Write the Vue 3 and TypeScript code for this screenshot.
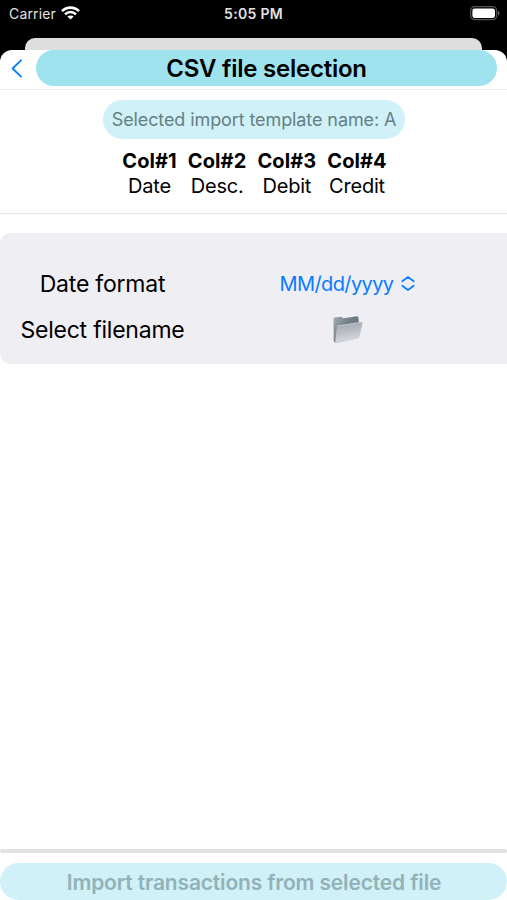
<script setup lang="ts">
interface ImportColumn {
  heading: string
  field: string
}

const columns: ImportColumn[] = [
  { heading: 'Col#1', field: 'Date' },
  { heading: 'Col#2', field: 'Desc.' },
  { heading: 'Col#3', field: 'Debit' },
  { heading: 'Col#4', field: 'Credit' },
]
const templateName = 'A'
const dateFormat = 'MM/dd/yyyy'
</script>

<template>
  <div class="screen">
    <div class="status">
      <div class="carrier">
        <span>Carrier</span>
        <svg class="wifi" width="19" height="14" viewBox="0 0 19 14" fill="none" stroke="#fff">
          <path d="M1 5.2 C5.7 .4 13.3 .4 18 5.2" stroke-width="2.6" />
          <path d="M4 8.3 C7.1 5.2 11.9 5.2 15 8.3" stroke-width="2.4" />
          <path d="M6.4 10.5 C8.1 9 10.9 9 12.6 10.5 L9.5 13.6Z" fill="#fff" stroke="none" />
        </svg>
      </div>
      <span class="time">5:05 PM</span>
      <svg class="battery" width="30" height="15" viewBox="0 0 30 15">
        <rect x="0.7" y="0.7" width="26" height="13" rx="4" fill="none" stroke="#555" stroke-width="1.2" />
        <rect x="2.4" y="2.4" width="22.6" height="9.6" rx="2.3" fill="#fff" />
        <path d="M28 5 C30 5.7 30 8.8 28 9.5Z" fill="#666" />
      </svg>
    </div>
    <div class="back-sheet"></div>
    <main class="sheet">
      <header class="header">
        <button class="back" aria-label="Back">
          <svg width="12" height="19" viewBox="0 0 12 19" fill="none" stroke="#087cff" stroke-width="1.8" stroke-linecap="round" stroke-linejoin="round">
            <path d="M10 1.3 L1.6 9.5 L10 17.7" />
          </svg>
        </button>
        <h1 class="title"><span>CSV file selection</span></h1>
      </header>
      <section class="template">
        <div class="template-name"><span>Selected import template name: {{ templateName }}</span></div>
        <div class="columns">
          <div v-for="column in columns" :key="column.heading" class="column">
            <strong>{{ column.heading }}</strong>
            <span>{{ column.field }}</span>
          </div>
        </div>
      </section>
      <section class="options">
        <div class="labels">
          <span>Date format</span>
          <span>Select filename</span>
        </div>
        <div class="controls">
          <button class="picker">
            <span>{{ dateFormat }}</span>
            <svg width="14" height="16" viewBox="0 0 14 16" fill="none" stroke="#087cff" stroke-width="1.7" stroke-linecap="round" stroke-linejoin="round">
              <path d="M1.3 5.2 L7 1 L12.7 5.2 M1.3 9.8 L7 14 L12.7 9.8" />
            </svg>
          </button>
          <button class="folder" aria-label="Choose file">
            <svg width="32" height="30" viewBox="0 0 32 30">
              <defs>
                <linearGradient id="folder-back" x1="0" y1="0" x2="1" y2="0.6">
                  <stop offset="0" stop-color="#a3adb2" />
                  <stop offset="0.5" stop-color="#758188" />
                  <stop offset="1" stop-color="#626e76" />
                </linearGradient>
                <linearGradient id="folder-front" x1="0.3" y1="0" x2="0.5" y2="1">
                  <stop offset="0" stop-color="#a0a5ad" />
                  <stop offset="0.5" stop-color="#bdc0c7" />
                  <stop offset="0.85" stop-color="#d3d5da" />
                  <stop offset="1" stop-color="#8d989f" />
                </linearGradient>
              </defs>
              <path d="M1.5 3.5 L2.5 2.4 L9 1.7 L11.5 3.2 L25 1.2 L26.3 2 L27 9 L5 27 L2.8 27.8 L1.7 26Z" fill="url(#folder-back)" />
              <path d="M5.5 10.8 L29.3 6.9 Q30.8 6.7 30.5 8.2 L27.5 21.9 Q27.2 23.1 26 23.4 L4 28 Q2.7 28.1 2.9 26.7 L4.3 12.2 Q4.5 11 5.5 10.8Z" fill="url(#folder-front)" />
              <path d="M5.5 11.1 L30 7.1" stroke="#d4d8dc" stroke-width="0.7" />
              <path d="M2.9 27 L4.4 12" stroke="#7b878e" stroke-width="0.7" />
            </svg>
          </button>
        </div>
      </section>
      <footer class="footer">
        <div class="rule"></div>
        <button class="import" disabled><span>Import transactions from selected file</span></button>
      </footer>
    </main>
  </div>
</template>

<style>
body {
  background: #000;
}
</style>

<style scoped>
* {
  box-sizing: border-box;
}
button {
  border: 0;
  padding: 0;
  background: none;
  font: inherit;
}
span, strong {
  white-space: nowrap;
}
svg {
  display: block;
}
.screen {
  width: 507px;
  height: 900px;
  background: #000;
  font-family: Inter, "Liberation Sans", sans-serif;
  color: #000;
  display: flex;
  flex-direction: column;
  overflow: hidden;
}
.status {
  height: 38px;
  flex: none;
  display: grid;
  grid-template-columns: 1fr auto 1fr;
  padding: 4px 7px 0 9px;
  color: #e2e2e2;
  font-size: 14px;
  line-height: 20px;
}
.carrier {
  display: flex;
  gap: 5px;
  letter-spacing: 0.15px;
}
.wifi {
  margin-top: 2px;
}
.time {
  font-weight: 600;
  letter-spacing: 0.3px;
  margin-right: 2px;
}
.battery {
  justify-self: end;
  margin-top: 2px;
}
.back-sheet {
  height: 12px;
  flex: none;
  margin: 0 25px;
  background: #dedede;
  border-radius: 10px 10px 0 0;
}
.sheet {
  flex: 1;
  background: #fff;
  border-radius: 12px 12px 0 0;
  display: flex;
  flex-direction: column;
}
.header {
  height: 40px;
  display: flex;
  padding: 0 10px 0 11px;
  border-bottom: 1px solid #ececec;
}
.back {
  width: 25px;
  height: 36px;
  display: flex;
  align-items: center;
}
.title {
  flex: 1;
  height: 36px;
  margin: 0;
  border-radius: 18px;
  background: #9fe3ef;
  text-align: center;
  font-size: 24px;
  font-weight: 600;
  letter-spacing: -0.25px;
  line-height: 38px;
}
.template {
  height: 124px;
  padding-top: 10px;
  border-bottom: 1px solid #e6e6e6;
  display: flex;
  flex-direction: column;
  align-items: center;
}
.template-name {
  width: 302px;
  height: 39px;
  padding-left: 1px;
  border-radius: 19.5px;
  background: #cff1f7;
  color: #678085;
  text-align: center;
  font-size: 18px;
  letter-spacing: -0.1px;
  line-height: 39px;
}
.columns {
  margin: 10px 0 0 2px;
  display: flex;
  gap: 11px;
}
.column {
  display: flex;
  flex-direction: column;
  align-items: center;
  font-size: 20px;
  letter-spacing: -0.2px;
  line-height: 25px;
}
.column strong {
  font-weight: 700;
  letter-spacing: 0.1px;
}
.options {
  height: 131px;
  margin-top: 19px;
  padding-top: 28px;
  background: #efeef3;
  border-radius: 11px 0 0 11px;
  display: flex;
}
.labels {
  width: 205px;
  display: flex;
  flex-direction: column;
  align-items: center;
  font-size: 23px;
  letter-spacing: -0.22px;
  line-height: 46px;
}
.controls {
  width: 284px;
  display: flex;
  flex-direction: column;
  align-items: center;
}
.picker {
  height: 46px;
  display: flex;
  align-items: center;
  gap: 7px;
  color: #087cff;
  font-size: 20px;
  letter-spacing: -0.6px;
}
.folder {
  height: 46px;
  margin-left: 2px;
  display: flex;
  align-items: center;
}
.footer {
  margin-top: auto;
}
.rule {
  height: 4px;
  margin-bottom: 10px;
  border-radius: 2px;
  background: #e2e2e2;
}
.import {
  display: block;
  width: 100%;
  height: 37px;
  padding: 2px 0 0 1px;
  border-radius: 18.5px;
  background: #cff1f7;
  color: #93b2b8;
  font-size: 21px;
  font-weight: 600;
  letter-spacing: -0.16px;
  line-height: 35px;
}
</style>
